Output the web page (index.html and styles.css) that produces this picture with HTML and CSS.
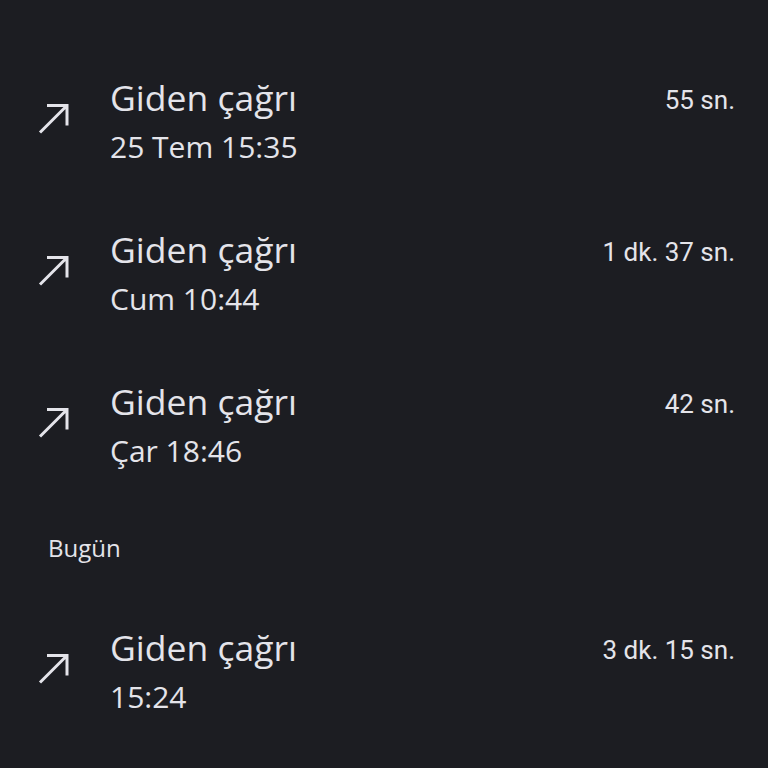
FILE: index.html
```html
<!DOCTYPE html>
<html lang="tr">
<head>
<meta charset="utf-8">
<link rel="stylesheet" href="styles.css">
</head>
<body>
<div class="list">
  <div class="row">
    <div class="icon"><svg width="32" height="32" viewBox="0 0 32 32"><path d="M9 8.5h20v20M29 8.5L2 35.5" fill="none" stroke="#e4e4ea" stroke-width="3"/></svg></div>
    <div class="text"><div class="title">Giden çağrı</div><div class="sub">25 Tem 15:35</div></div>
    <div class="dur">55 sn.</div>
  </div>
  <div class="row">
    <div class="icon"><svg width="32" height="32" viewBox="0 0 32 32"><path d="M9 8.5h20v20M29 8.5L2 35.5" fill="none" stroke="#e4e4ea" stroke-width="3"/></svg></div>
    <div class="text"><div class="title">Giden çağrı</div><div class="sub">Cum 10:44</div></div>
    <div class="dur">1 dk. 37 sn.</div>
  </div>
  <div class="row">
    <div class="icon"><svg width="32" height="32" viewBox="0 0 32 32"><path d="M9 8.5h20v20M29 8.5L2 35.5" fill="none" stroke="#e4e4ea" stroke-width="3"/></svg></div>
    <div class="text"><div class="title">Giden çağrı</div><div class="sub">Çar 18:46</div></div>
    <div class="dur">42 sn.</div>
  </div>
  <div class="header">Bugün</div>
  <div class="row">
    <div class="icon"><svg width="32" height="32" viewBox="0 0 32 32"><path d="M9 8.5h20v20M29 8.5L2 35.5" fill="none" stroke="#e4e4ea" stroke-width="3"/></svg></div>
    <div class="text"><div class="title">Giden çağrı</div><div class="sub">15:24</div></div>
    <div class="dur">3 dk. 15 sn.</div>
  </div>
</div>
</body>
</html>
```
FILE: styles.css
```css
html, body {
  margin: 0;
  padding: 0;
  background: #1c1d22;
  height: 100%;
}
body {
  font-family: "Open Sans", Roboto, sans-serif;
  color: #e4e4ea;
}
.list {
  padding-top: 72px;
}
.row {
  display: flex;
  align-items: center;
  height: 100px;
  padding: 0 33px 0 38px;
  margin-bottom: 52px;
}
.icon {
  width: 72px;
  height: 32px;
  flex: none;
  margin-top: -18px;
}
.icon svg { display: block; overflow: visible; }
.text {
  flex: 1;
  display: flex;
  flex-direction: column;
  align-self: stretch;
}
.title {
  font-size: 35.5px;
  line-height: 50px;
}
.sub {
  font-size: 30px;
  line-height: 50px;
}
.dur {
  align-self: flex-start;
  font-family: Roboto, sans-serif;
  font-size: 26px;
  line-height: 50px;
  padding-top: 3px;
}
.header {
  font-size: 24px;
  font-weight: 500;
  padding-left: 48px;
  margin-top: 3px;
  line-height: 40px;
  margin-bottom: 54px;
}
```
